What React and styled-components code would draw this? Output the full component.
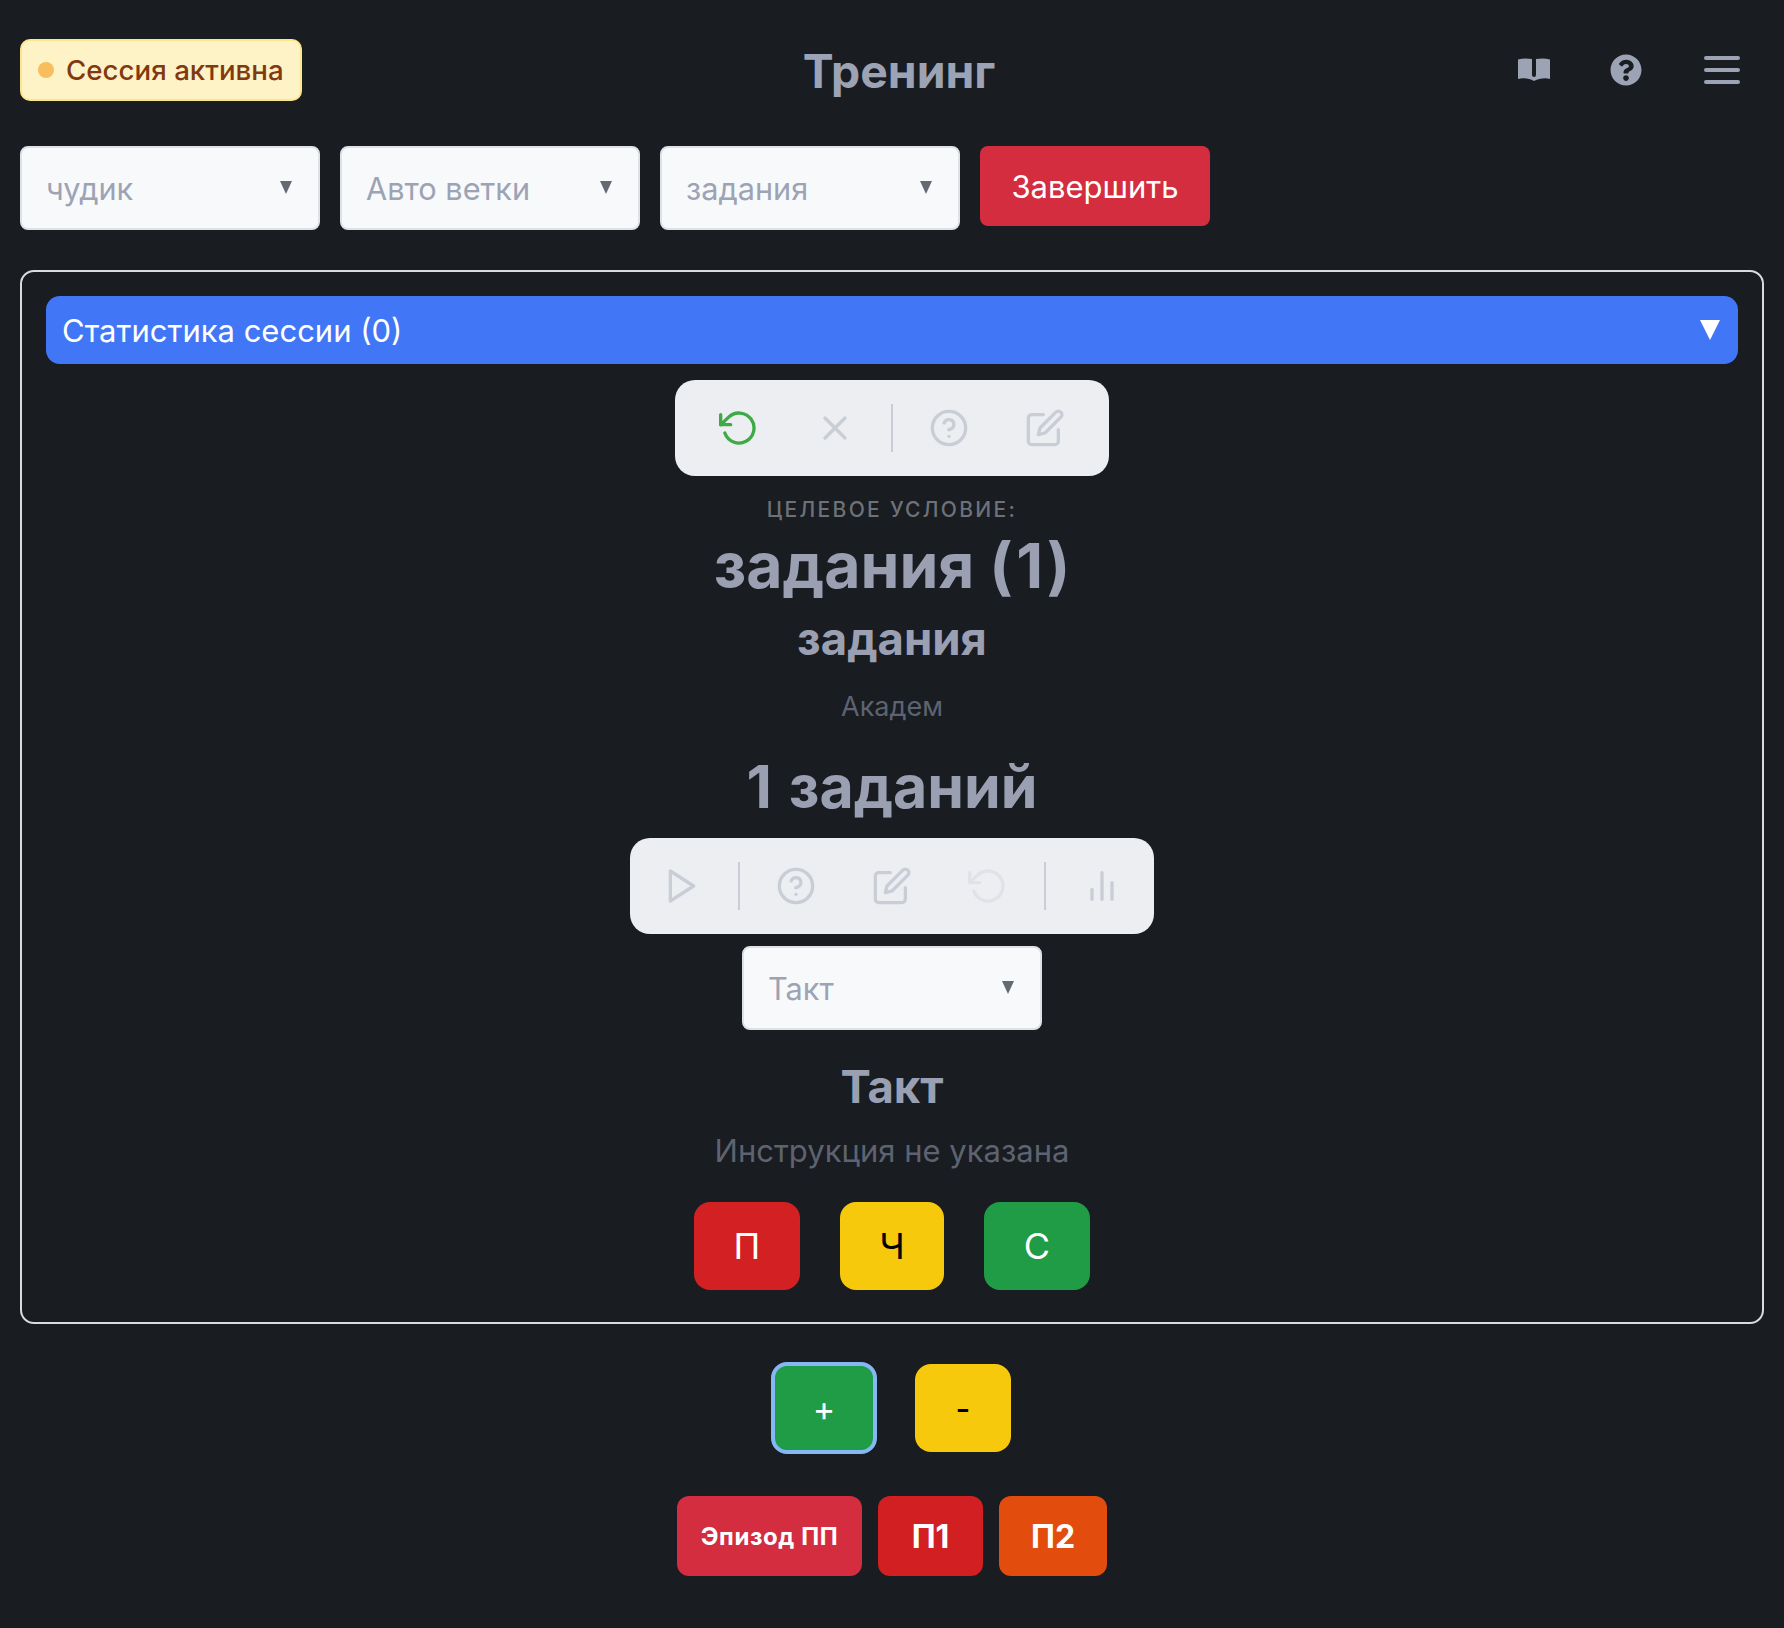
import React from "react";
import styled, { createGlobalStyle } from "styled-components";
import { FiRotateCcw, FiX, FiHelpCircle, FiEdit, FiPlay, FiBarChart2 } from "react-icons/fi";
import { FaQuestionCircle } from "react-icons/fa";

const Global = createGlobalStyle`
  html, body {
    margin: 0;
    padding: 0;
    background: #191c21;
    font-family: Inter, "Noto Sans", sans-serif;
  }
`;

const Page = styled.div`
  width: 1784px;
  height: 1628px;
  box-sizing: border-box;
  padding: 39px 20px 0;
  background: #191c21;
`;

const Header = styled.header`
  position: relative;
  display: flex;
  align-items: center;
  justify-content: space-between;
  height: 62px;
`;

const Badge = styled.div`
  display: flex;
  align-items: center;
  gap: 12px;
  width: 282px;
  height: 62px;
  box-sizing: border-box;
  padding-left: 16px;
  background: #fef3c7;
  border: 2px solid #fde68a;
  border-radius: 10px;
  color: #82390f;
  font-size: 27.7px;
  font-weight: 500;
  white-space: nowrap;
`;

const Dot = styled.span`
  width: 16px;
  height: 16px;
  border-radius: 50%;
  background: #f8bd5c;
`;

const Title = styled.h1`
  position: absolute;
  left: 0;
  right: 0;
  top: 0;
  margin: 0;
  padding-left: 14px;
  text-align: center;
  color: #9ca3b4;
  font-size: 46.3px;
  line-height: 64px;
  font-weight: 700;
`;

const HeaderIcons = styled.div`
  display: flex;
  align-items: center;
  gap: 60px;
  padding-right: 24px;
  color: #9ca3b4;
`;

const Burger = styled.div`
  display: flex;
  flex-direction: column;
  gap: 8px;
  width: 36px;
  margin-left: 2px;
  span {
    height: 4px;
    border-radius: 2px;
    background: #9ca3b4;
  }
`;

const Controls = styled.div`
  display: flex;
  align-items: flex-start;
  gap: 20px;
  margin-top: 45px;
`;

const SelectBox = styled.div`
  position: relative;
  width: 300px;
  height: 84px;
  box-sizing: border-box;
  display: flex;
  align-items: center;
  padding: 1px 24px 0;
  background: #f8f9fb;
  border: 2px solid #dee2e8;
  border-radius: 8px;
  color: #9ca3b4;
  font-size: 30.7px;
  flex-shrink: 0;

  &::after {
    content: "";
    position: absolute;
    right: 26px;
    top: 33px;
    border-left: 6.5px solid transparent;
    border-right: 6.5px solid transparent;
    border-top: 13px solid #646a73;
  }
`;

const FinishButton = styled.button`
  width: 230px;
  height: 80px;
  border: none;
  border-radius: 8px;
  background: #d32d3f;
  color: #fff;
  font-family: inherit;
  font-size: 31px;
`;

const Panel = styled.section`
  display: flex;
  flex-direction: column;
  align-items: center;
  height: 1054px;
  box-sizing: border-box;
  margin-top: 40px;
  padding: 24px 24px 0;
  border: 2px solid #d9dbde;
  border-radius: 14px;
`;

const StatsBar = styled.div`
  align-self: stretch;
  display: flex;
  align-items: center;
  justify-content: space-between;
  height: 68px;
  padding: 0 18px 0 16px;
  background: #4177f6;
  border-radius: 14px;
  color: #fff;
  font-size: 31px;
`;

const Caret = styled.span`
  width: 0;
  height: 0;
  border-left: 10px solid transparent;
  border-right: 10px solid transparent;
  border-top: 20px solid #fff;
`;

const Toolbar = styled.div`
  display: flex;
  align-items: center;
  height: 96px;
  padding: 0 ${(p) => p.$pad}px;
  margin-top: ${(p) => p.$top}px;
  background: #edeef2;
  border-radius: 20px;
`;

const ToolIcon = styled.span`
  display: flex;
  align-items: center;
  justify-content: center;
  width: 96px;
  color: ${(p) => p.$color || "#c9ced6"};
`;

const Divider = styled.span`
  width: 2px;
  height: 48px;
  margin: 0 8px;
  background: #c9ced6;
`;

const Eyebrow = styled.div`
  margin-top: 21px;
  color: #6e7278;
  font-size: 21px;
  line-height: 26px;
  font-weight: 500;
  letter-spacing: 2.3px;
`;

const Heading = styled.div`
  color: #9aa0b2;
  font-weight: 700;
  font-size: ${(p) => p.$size}px;
  line-height: ${(p) => p.$line}px;
  margin-top: ${(p) => p.$top}px;
  word-spacing: ${(p) => p.$wordGap || 0}px;
`;

const Digit = styled.span`
  padding: 0 3.5px;
`;

const Note = styled.div`
  color: #5d6370;
  font-size: ${(p) => p.$size}px;
  line-height: ${(p) => p.$line}px;
  margin-top: ${(p) => p.$top}px;
`;

const CenterSelect = styled(SelectBox)`
  margin-top: 12px;
`;

const Row = styled.div`
  display: flex;
  align-items: center;
  justify-content: center;
  gap: ${(p) => p.$gap}px;
  margin-top: ${(p) => p.$top}px;
  padding-right: ${(p) => p.$nudge || 0}px;
`;

const ActionButton = styled.button`
  width: ${(p) => p.$w}px;
  height: ${(p) => p.$h}px;
  box-sizing: border-box;
  padding: 0;
  border: ${(p) => (p.$focus ? "4px solid #86b7f5" : "none")};
  border-radius: ${(p) => p.$radius || 16}px;
  background: ${(p) => p.$bg};
  color: ${(p) => p.$fg || "#fff"};
  font-family: inherit;
  font-size: ${(p) => p.$size || 36}px;
  font-weight: ${(p) => p.$weight || 400};
  letter-spacing: ${(p) => p.$track || 0}px;
`;

const Bottom = styled.div`
  display: flex;
  flex-direction: column;
  align-items: center;
`;

const BookIcon = () => (
  <svg width="32" height="24" viewBox="0 0 32 24" fill="currentColor">
    <path d="M0 1.500C4 .3 9 .2 14 1v16a2 2 0 0 0 4 0V1c5-.8 10-.7 14 .5V21c-5-1.400-11-.5-16 2-5-2.500-11-3.400-16-2z" />
  </svg>
);

export default function App() {
  return (
    <Page>
      <Global />
      <Header>
        <Badge>
          <Dot />
          Сессия активна
        </Badge>
        <Title>Тренинг</Title>
        <HeaderIcons>
          <BookIcon />
          <FaQuestionCircle size={32} />
          <Burger>
            <span />
            <span />
            <span />
          </Burger>
        </HeaderIcons>
      </Header>

      <Controls>
        <SelectBox>чудик</SelectBox>
        <SelectBox>Авто ветки</SelectBox>
        <SelectBox>задания</SelectBox>
        <FinishButton>Завершить</FinishButton>
      </Controls>

      <Panel>
        <StatsBar>
          Статистика сессии (0)
          <Caret />
        </StatsBar>

        <Toolbar $pad={16} $top={16}>
          <ToolIcon $color="#3faa45"><FiRotateCcw size={40} /></ToolIcon>
          <ToolIcon><FiX size={40} /></ToolIcon>
          <Divider />
          <ToolIcon><FiHelpCircle size={40} /></ToolIcon>
          <ToolIcon><FiEdit size={40} /></ToolIcon>
        </Toolbar>

        <Eyebrow>ЦЕЛЕВОЕ УСЛОВИЕ:</Eyebrow>
        <Heading $size={62.5} $line={72} $top={6}>задания (<Digit>1</Digit>)</Heading>
        <Heading $size={45.5} $line={54} $top={11}>задания</Heading>
        <Note $size={27} $line={32} $top={25}>Академ</Note>
        <Heading $size={59} $wordGap={3} $line={72} $top={28}>1 заданий</Heading>

        <Toolbar $pad={4} $top={15}>
          <ToolIcon><FiPlay size={40} /></ToolIcon>
          <Divider />
          <ToolIcon><FiHelpCircle size={40} /></ToolIcon>
          <ToolIcon><FiEdit size={40} /></ToolIcon>
          <ToolIcon $color="#dfe2e7"><FiRotateCcw size={40} /></ToolIcon>
          <Divider />
          <ToolIcon><FiBarChart2 size={40} /></ToolIcon>
        </Toolbar>

        <CenterSelect>Такт</CenterSelect>
        <Heading $size={45.5} $line={54} $top={30}>Такт</Heading>
        <Note $size={31} $line={36} $top={19}>Инструкция не указана</Note>

        <Row $gap={40} $top={33}>
          <ActionButton $w={106} $h={88} $bg="#d32023">П</ActionButton>
          <ActionButton $w={104} $h={88} $bg="#f6c90c" $fg="#000">Ч</ActionButton>
          <ActionButton $w={106} $h={88} $bg="#1f9c45">С</ActionButton>
        </Row>
      </Panel>

      <Bottom>
        <Row $gap={38} $top={38} $nudge={2}>
          <ActionButton $w={106} $h={92} $bg="#1f9c45" $focus $size={34}>+</ActionButton>
          <ActionButton $w={96} $h={88} $bg="#f6c90c" $fg="#000" $size={32} $weight={500}>-</ActionButton>
        </Row>
        <Row $gap={16} $top={42}>
          <ActionButton $w={185} $h={80} $bg="#d32d3f" $size={24} $track={0.6} $weight={700} $radius={12}>Эпизод ПП</ActionButton>
          <ActionButton $w={105} $h={80} $bg="#d21f21" $size={32} $weight={700} $radius={12}>П1</ActionButton>
          <ActionButton $w={108} $h={80} $bg="#e24c0c" $size={32} $weight={700} $radius={12}>П2</ActionButton>
        </Row>
      </Bottom>
    </Page>
  );
}
